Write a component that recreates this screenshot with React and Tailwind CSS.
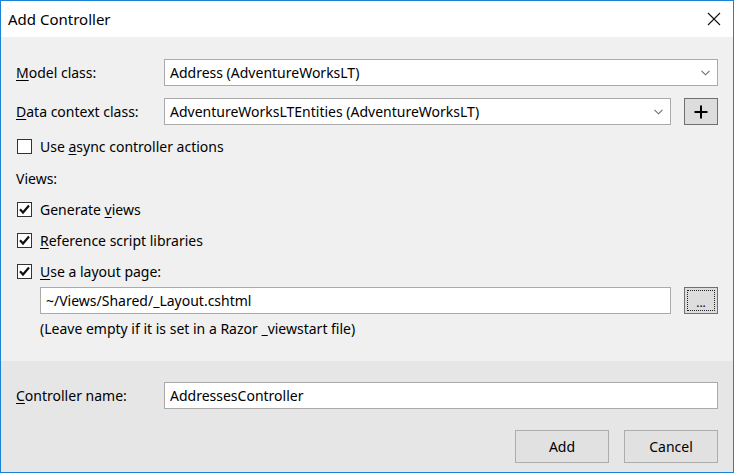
import React from "react";

const font = { fontFamily: '"Noto Sans", "Open Sans", sans-serif' };

function U({ children }) {
  return <span className="underline underline-offset-2 decoration-1">{children}</span>;
}

function Chevron() {
  return (
    <svg width="9" height="6" viewBox="0 0 9 6" className="shrink-0">
      <path d="M0.5 0.8 L4.5 4.8 L8.5 0.8" fill="none" stroke="#6d6d6d" strokeWidth="1.1" />
    </svg>
  );
}

function Check({ checked }) {
  return (
    <div className="w-[15px] h-[15px] border border-[#333333] bg-white flex items-center justify-center shrink-0">
      {checked && (
        <svg width="13" height="13" viewBox="0 0 13 13">
          <path d="M2 6.3 L5 9.5 L11 2.5" fill="none" stroke="#111" strokeWidth="2.2" />
        </svg>
      )}
    </div>
  );
}

export default function App() {
  return (
    <div
      className="w-[734px] h-[473px] border border-[#1883d7] flex flex-col text-[14px] text-black overflow-hidden"
      style={font}
    >
      <div className="h-[36px] bg-white flex items-center justify-between pl-[7px] pr-[12px] shrink-0">
        <span className="text-[15px] text-[#000]">Add Controller</span>
        <svg width="14" height="14" viewBox="0 0 14 14">
          <path d="M1 1 L13 13 M13 1 L1 13" stroke="#111" strokeWidth="1.1" />
        </svg>
      </div>
      <div className="h-[324px] bg-[#f0f0f0] pt-[22px] pl-[15px] pr-[15px] flex flex-col shrink-0">
        <div className="h-[27px] flex items-center">
          <div className="w-[148px]">
            <U>M</U>odel class:
          </div>
          <div className="flex-1 h-[27px] bg-white border border-[#aaaaaa] flex items-center justify-between pl-[5px] pr-[7px]">
            <span>Address (AdventureWorksLT)</span>
            <Chevron />
          </div>
        </div>
        <div className="h-[27px] mt-[12px] flex items-center">
          <div className="w-[148px]">
            <U>D</U>ata context class:
          </div>
          <div className="flex-1 h-[27px] bg-white border border-[#aaaaaa] flex items-center justify-between pl-[5px] pr-[7px]">
            <span>AdventureWorksLTEntities (AdventureWorksLT)</span>
            <Chevron />
          </div>
          <div className="w-[34px] h-[27px] ml-[13px] bg-[#dddddd] border border-[#707070] flex items-center justify-center">
            <svg width="14" height="14" viewBox="0 0 14 14">
              <path d="M7 0.5 V13.5 M0.5 7 H13.5" stroke="#000" strokeWidth="2" />
            </svg>
          </div>
        </div>
        <div className="h-[16px] mt-[13px] flex items-center gap-[8px] pl-[1px]">
          <Check checked={false} />
          <span>
            Use <U>a</U>sync controller actions
          </span>
        </div>
        <div className="h-[16px] mt-[16px] flex items-center">Views:</div>
        <div className="h-[16px] mt-[15px] flex items-center gap-[8px] pl-[1px]">
          <Check checked />
          <span>
            Generate <U>v</U>iews
          </span>
        </div>
        <div className="h-[16px] mt-[15px] flex items-center gap-[8px] pl-[1px]">
          <Check checked />
          <span>
            <U>R</U>eference script libraries
          </span>
        </div>
        <div className="h-[16px] mt-[15px] flex items-center gap-[8px] pl-[1px]">
          <Check checked />
          <span>
            <U>U</U>se a layout page:
          </span>
        </div>
        <div className="h-[27px] mt-[8px] flex items-center pl-[24px]">
          <div className="flex-1 h-[27px] bg-white border border-[#aaaaaa] flex items-center pl-[5px]">
            ~/Views/Shared/_Layout.cshtml
          </div>
          <div className="w-[34px] h-[27px] ml-[13px] bg-[#dddddd] border border-[#707070] p-[2px]">
            <div className="w-full h-full border border-dotted border-[#222] flex items-end justify-center pb-[1px] leading-none text-[12px]">
              ...
            </div>
          </div>
        </div>
        <div className="h-[16px] mt-[6px] flex items-center pl-[24px]">
          (Leave empty if it is set in a Razor _viewstart file)
        </div>
      </div>
      <div className="flex-1 bg-[#e6e6e6] pt-[21px] pl-[15px] pr-[15px] flex flex-col">
        <div className="h-[27px] flex items-center">
          <div className="w-[148px]">
            <U>C</U>ontroller name:
          </div>
          <div className="flex-1 h-[27px] bg-white border border-[#aaaaaa] flex items-center pl-[5px]">
            AddressesController
          </div>
        </div>
        <div className="mt-[21px] flex justify-end gap-[15px]">
          <div className="w-[94px] h-[33px] bg-[#e1e1e1] border border-[#adadad] flex items-center justify-center">
            Add
          </div>
          <div className="w-[94px] h-[33px] bg-[#e1e1e1] border border-[#adadad] flex items-center justify-center">
            Cancel
          </div>
        </div>
      </div>
    </div>
  );
}
